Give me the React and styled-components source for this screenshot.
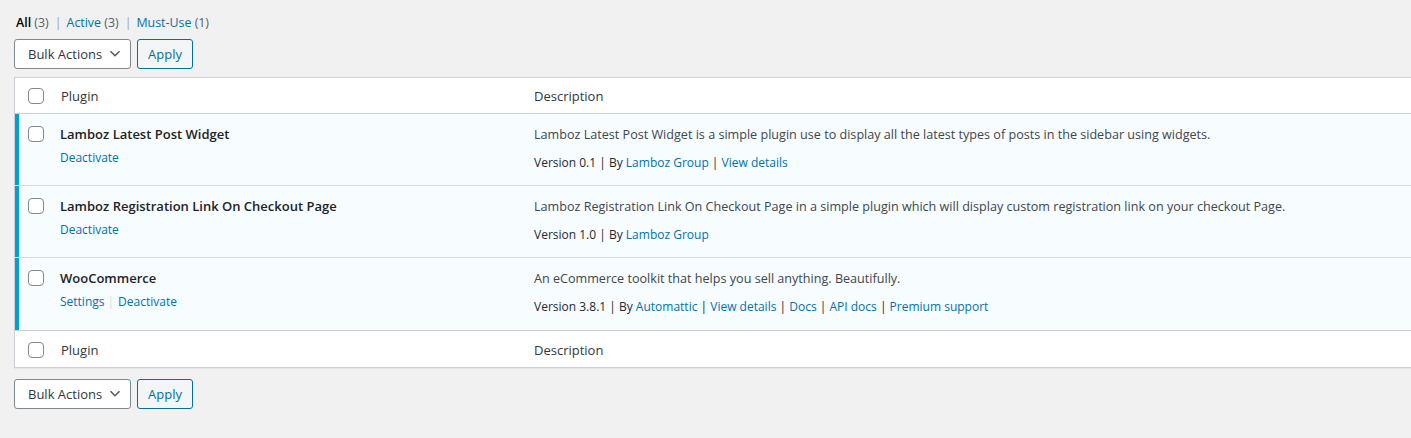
import React from "react";
import styled, { createGlobalStyle } from "styled-components";

const GlobalStyle = createGlobalStyle`
  html, body {
    margin: 0;
    background: #f1f1f1;
    overflow: hidden;
  }
  body {
    font-family: "Open Sans", "Noto Sans", sans-serif;
    font-size: 12px;
    color: #444;
  }
`;

const plugins = [
  {
    name: "Lamboz Latest Post Widget",
    actions: ["Deactivate"],
    description:
      "Lamboz Latest Post Widget is a simple plugin use to display all the latest types of posts in the sidebar using widgets.",
    version: "0.1",
    author: "Lamboz Group",
    links: ["View details"],
  },
  {
    name: "Lamboz Registration Link On Checkout Page",
    actions: ["Deactivate"],
    description:
      "Lamboz Registration Link On Checkout Page in a simple plugin which will display custom registration link on your checkout Page.",
    version: "1.0",
    author: "Lamboz Group",
    links: [],
  },
  {
    name: "WooCommerce",
    actions: ["Settings", "Deactivate"],
    description: "An eCommerce toolkit that helps you sell anything. Beautifully.",
    version: "3.8.1",
    author: "Automattic",
    links: ["View details", "Docs", "API docs", "Premium support"],
  },
];

const BulkBar = ({ bottom }) => (
  <Actions bottom={bottom}>
    <Select>
      Bulk Actions
      <Chevron viewBox="0 0 20 20">
        <path d="M5 7l5 5 5-5" fill="none" stroke="#555" strokeWidth="1.6" />
      </Chevron>
    </Select>
    <Button>Apply</Button>
  </Actions>
);

const App = () => {
  return (
    <Page>
      <GlobalStyle />
      <Filters>
        <Current>All</Current> <Count>(3)</Count>
        <Sep>|</Sep>
        <Link>Active</Link> <Count>(3)</Count>
        <Sep>|</Sep>
        <Link>Must-Use</Link> <Count>(1)</Count>
      </Filters>
      <BulkBar />
      <Table>
        <HeadRow>
          <CheckCell>
            <Box />
          </CheckCell>
          <HeadCell>Plugin</HeadCell>
          <HeadCell desc>Description</HeadCell>
        </HeadRow>
        {plugins.map((p, i) => (
          <Row key={i} last={i === plugins.length - 1}>
            <CheckCell active>
              <Box />
            </CheckCell>
            <NameCell>
              <Title>{p.name}</Title>
              <RowActions>
                {p.actions.map((a, j) => (
                  <React.Fragment key={j}>
                    {j > 0 && <ActionSep>|</ActionSep>}
                    <Link>{a}</Link>
                  </React.Fragment>
                ))}
              </RowActions>
            </NameCell>
            <DescCell>
              <Desc>{p.description}</Desc>
              <Meta>
                Version {p.version} | By <Link>{p.author}</Link>
                {p.links.map((l, j) => (
                  <React.Fragment key={j}>
                    {" | "}
                    <Link>{l}</Link>
                  </React.Fragment>
                ))}
              </Meta>
            </DescCell>
          </Row>
        ))}
        <FootRow>
          <CheckCell>
            <Box />
          </CheckCell>
          <HeadCell>Plugin</HeadCell>
          <HeadCell desc>Description</HeadCell>
        </FootRow>
      </Table>
      <BulkBar bottom />
    </Page>
  );
};

const Page = styled.div`
  padding: 13px 0 0 14px;
  width: 1440px;
`;

const Filters = styled.div`
  padding-left: 2px;
  height: 20px;
  line-height: 20px;
  white-space: nowrap;
  font-size: 12.4px;
`;

const Current = styled.span`
  color: #000;
  font-weight: 600;
`;

const Count = styled.span`
  color: #555d66;
`;

const Sep = styled.span`
  color: #a0a5aa;
  margin: 0 5px 0 6px;
`;

const Link = styled.span`
  color: #0073aa;
`;

const Actions = styled.div`
  display: flex;
  gap: 6px;
  margin-top: ${(p) => (p.bottom ? "11px" : "6px")};
  margin-bottom: 8px;
`;

const Select = styled.div`
  box-sizing: border-box;
  width: 117px;
  height: 30px;
  display: flex;
  align-items: center;
  justify-content: space-between;
  padding: 0 6px 0 13px;
  background: #fff;
  border: 1px solid #7e8993;
  border-radius: 3px;
  color: #32373c;
  font-size: 13px;
`;

const Chevron = styled.svg`
  width: 18px;
  height: 18px;
`;

const Button = styled.div`
  box-sizing: border-box;
  height: 30px;
  padding: 0 10px;
  display: flex;
  align-items: center;
  background: #f3f5f6;
  border: 1px solid #0071a1;
  border-radius: 3px;
  color: #0071a1;
  font-size: 13px;
`;

const Table = styled.div`
  border: 1px solid #ccd0d4;
  background: #fff;
  box-shadow: 0 1px 1px rgba(0, 0, 0, 0.04);
`;

const grid = `
  display: grid;
  grid-template-columns: 36px 474px 1fr;
`;

const HeadRow = styled.div`
  ${grid}
  height: 35px;
  border-bottom: 1px solid #ccd0d4;
  align-items: center;
`;

const FootRow = styled(HeadRow)`
  box-sizing: border-box;
  border-bottom: none;
  border-top: 1px solid #ccd0d4;
  height: 37px;
  padding-top: 2px;
`;

const Row = styled.div`
  ${grid}
  height: ${(p) => (p.last ? "72px" : "71px")};
  background: #f7fcfe;
  border-bottom: ${(p) => (p.last ? "none" : "1px solid #dcdcde")};
`;

const CheckCell = styled.div`
  box-sizing: border-box;
  height: 100%;
  padding-left: ${(p) => (p.active ? "9px" : "13px")};
  border-left: ${(p) => (p.active ? "4px solid #00a0d2" : "none")};
  display: flex;
  align-items: ${(p) => (p.active ? "flex-start" : "center")};
  padding-top: ${(p) => (p.active ? "12px" : "0")};
`;

const Box = styled.div`
  box-sizing: border-box;
  width: 16px;
  height: 16px;
  border: 1px solid #7e8993;
  border-radius: 4px;
  background: #fff;
`;

const HeadCell = styled.div`
  padding-left: ${(p) => (p.desc ? "9px" : "10px")};
  color: #32373c;
  font-size: 13px;
`;

const NameCell = styled.div`
  padding: 10px 0 0 9px;
`;

const Title = styled.div`
  font-weight: 600;
  color: #1d2327;
  font-size: 13px;
  line-height: 20px;
`;

const RowActions = styled.div`
  margin-top: 4px;
  line-height: 20px;
  font-size: 12px;
`;

const ActionSep = styled.span`
  color: #ddd;
  margin: 0 4px 0 3px;
`;

const DescCell = styled.div`
  padding: 11px 0 0 9px;
`;

const Desc = styled.div`
  line-height: 20px;
  color: #40464d;
  font-size: 12.6px;
`;

const Meta = styled.div`
  margin-top: 8px;
  line-height: 20px;
  color: #23282d;
`;

export default App;
